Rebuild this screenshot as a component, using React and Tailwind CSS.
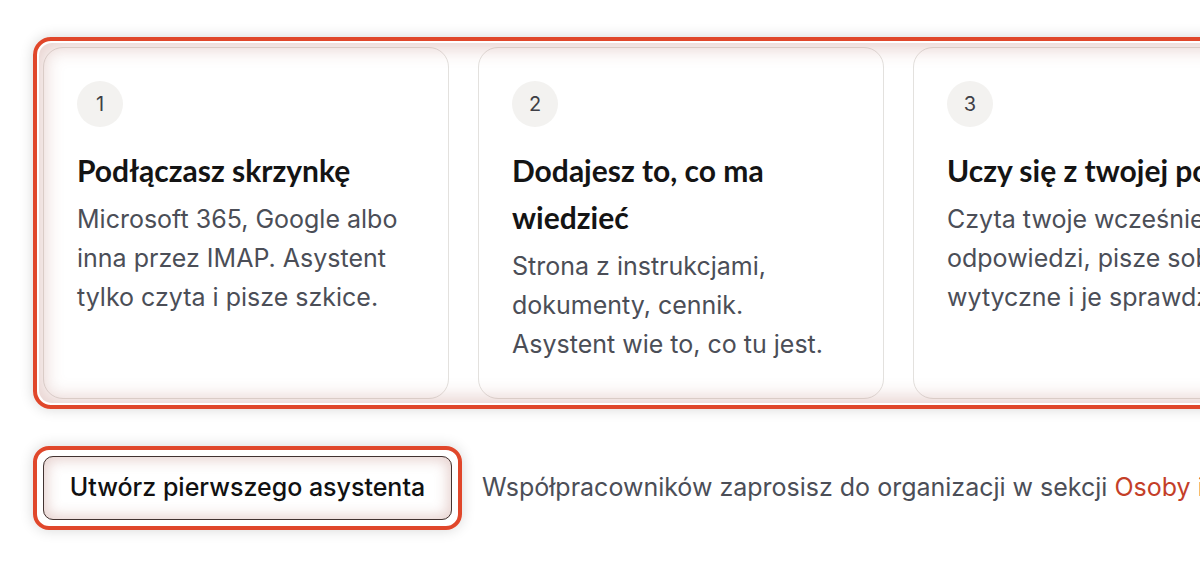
const steps = [
  {
    n: "1",
    title: "Podłączasz skrzynkę",
    body: "Microsoft 365, Google albo inna przez IMAP. Asystent tylko czyta i pisze szkice.",
  },
  {
    n: "2",
    title: "Dodajesz to, co ma wiedzieć",
    body: "Strona z instrukcjami, dokumenty, cennik. Asystent wie to, co tu jest.",
  },
  {
    n: "3",
    title: "Uczy się z twojej poczty",
    body: "Czyta twoje wcześniejsze odpowiedzi, pisze sobie wytyczne i je sprawdza.",
  },
];

function StepCard({ step }) {
  return (
    <div className="w-[406px] shrink-0 rounded-[20px] border border-[#e3e1de] bg-white px-[33px] pt-[33px] pb-[34px]">
      <div className="flex h-[46px] w-[46px] items-center justify-center rounded-full bg-[#f3f2f0] text-[20px] text-[#3f3f46]">
        {step.n}
      </div>
      <h3 className="mt-[20px] w-[340px] font-['Lato',sans-serif] text-[30px] font-bold leading-[47px] text-[#141414]">
        {step.title}
      </h3>
      <p className="mt-[6px] w-[330px] text-[25px] leading-[39px] text-[#4b4e57]">{step.body}</p>
    </div>
  );
}

export default function App() {
  return (
    <div className="h-[565px] w-[1200px] overflow-hidden bg-white pt-[37px] pl-[33px] font-['Inter',sans-serif]">
      <div className="relative w-max rounded-[18px] border-[4px] border-[#e0472b] p-[6px] shadow-[0_0_14px_rgba(0,0,0,0.16)]">
        <div className="flex gap-[29px]">
          {steps.map((s) => (
            <StepCard key={s.n} step={s} />
          ))}
        </div>
        <div className="pointer-events-none absolute inset-[2px] rounded-[13px] shadow-[inset_0_0_18px_6px_rgba(165,85,75,0.26)]" />
      </div>

      <div className="mt-[37px] flex items-center gap-[20px]">
        <div className="relative rounded-[16px] border-[4px] border-[#e0472b] p-[6px] shadow-[0_0_14px_rgba(0,0,0,0.16)]">
          <button className="flex h-[64px] w-[409px] items-center justify-center rounded-[10px] border border-[#2b2b2b] bg-white text-[25px] font-medium text-[#111]">
            Utwórz pierwszego asystenta
          </button>
          <div className="pointer-events-none absolute inset-[6px] rounded-[10px] shadow-[inset_0_0_14px_4px_rgba(165,85,75,0.28)]" />
        </div>
        <p className="whitespace-nowrap text-[25px] text-[#4b4e57]">
          Współpracowników zaprosisz do organizacji w sekcji{" "}
          <span className="text-[#c43e28]">Osoby i zespoły</span>
        </p>
      </div>
    </div>
  );
}
